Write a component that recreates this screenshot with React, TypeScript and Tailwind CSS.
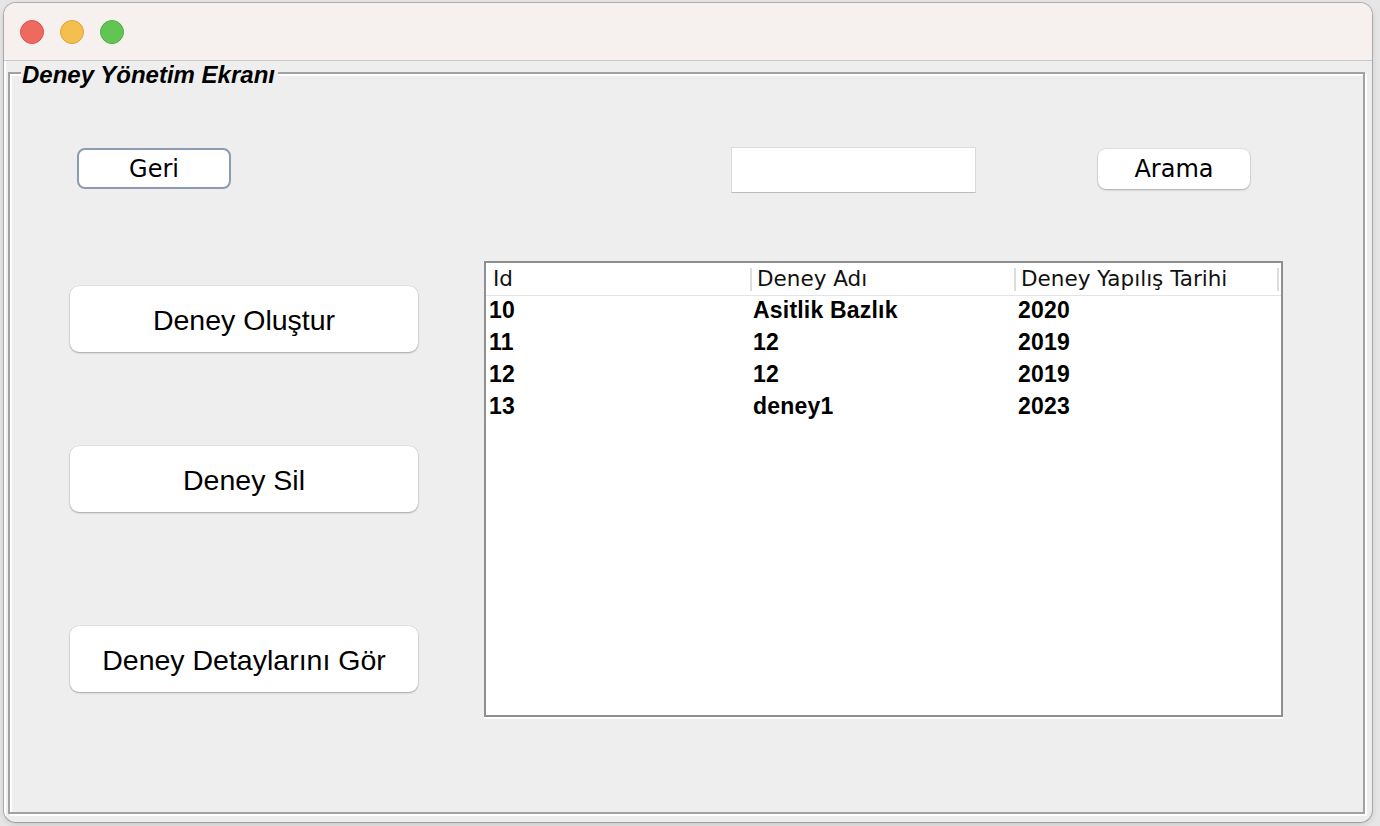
import React from 'react';

// Deney management window (Swing look on macOS)
const ROWS = [
  { id: '10', name: 'Asitlik Bazlık', year: '2020' },
  { id: '11', name: '12', year: '2019' },
  { id: '12', name: '12', year: '2019' },
  { id: '13', name: 'deney1', year: '2023' },
];

const lucida = { fontFamily: '"DejaVu Sans", "Open Sans", sans-serif' };
const helv = { fontFamily: '"Liberation Sans", Arial, sans-serif' };

function BigButton({ label, className = '' }: { label: string; className?: string }) {
  return (
    <button
      type="button"
      style={helv}
      className={`flex h-[66px] w-[348px] items-center justify-center rounded-[9px] bg-white pt-[3px] text-[28.5px] text-black shadow-[0_1px_2px_rgba(0,0,0,0.28),0_0_0_0.5px_rgba(0,0,0,0.08)] ${className}`}
    >
      {label}
    </button>
  );
}

function Table() {
  return (
    <div className="ml-[66px] flex h-[456px] w-[799px] flex-col border-2 border-[#8f8f8f] bg-white shadow-[0_2px_0_#fff]">
      <div
        style={lucida}
        className="flex h-[33px] items-center border-b border-[#e4e4e4] text-[21.5px] text-[#111]"
      >
        <div className="flex h-full w-[266px] items-center pl-[7px]">
          <span className="flex-1">Id</span>
          <span className="h-[23px] w-[2px] bg-[#dcdcdc]" />
        </div>
        <div className="flex h-full w-[264px] items-center pl-[5px]">
          <span className="flex-1">Deney Adı</span>
          <span className="h-[23px] w-[2px] bg-[#dcdcdc]" />
        </div>
        <div className="flex h-full w-[263px] items-center pl-[5px]">
          <span className="flex-1">Deney Yapılış Tarihi</span>
          <span className="h-[23px] w-[2px] bg-[#dcdcdc]" />
        </div>
      </div>
      {ROWS.map((r) => (
        <div
          key={r.id}
          style={helv}
          className="flex h-[32px] items-center pb-[4px] text-[23px] font-bold tracking-[0.2px] text-black"
        >
          <div className="w-[266px] pl-[3px]">{r.id}</div>
          <div className="w-[264px] pl-[1px]">{r.name}</div>
          <div className="w-[263px] pl-[2px]">{r.year}</div>
        </div>
      ))}
    </div>
  );
}

export default function App() {
  return (
    <div className="h-[826px] w-[1380px] overflow-hidden bg-[#e6e6e6] pl-[4px] pt-[3px]">
      <div className="flex h-[819px] w-[1368px] flex-col overflow-hidden rounded-[12px] bg-[#eeeeee] shadow-[0_0_0_1px_rgba(0,0,0,0.22),0_2px_6px_rgba(0,0,0,0.15)]">
        {/* title bar */}
        <div className="flex h-[58px] shrink-0 items-center gap-[16px] border-b border-[#c8c8c8] bg-[#f6f1ef] pl-[16px]">
          <span className="h-[24px] w-[24px] rounded-full border border-[#d9544a] bg-[#ee6a5f]" />
          <span className="h-[24px] w-[24px] rounded-full border border-[#d9a23c] bg-[#f5bf4f]" />
          <span className="h-[24px] w-[24px] rounded-full border border-[#4fae42] bg-[#61c554]" />
        </div>

        {/* content */}
        <div className="flex-1 pl-[4px] pt-[11px] shadow-[inset_2px_0_0_#fff]">
          <div className="relative h-[742px] w-[1357px] border-2 border-[#a2a2a2] shadow-[2px_2px_0_#fff,inset_2px_2px_0_#fff]">
            <div
              style={helv}
              className="absolute left-[11px] top-[-11px] bg-[#eeeeee] pl-[1px] pr-[3px] text-[24px] font-bold italic leading-[23px] text-black"
            >
              Deney Yönetim Ekranı
            </div>

            {/* top row */}
            <div className="mt-[73px] flex items-start" style={lucida}>
              <button
                type="button"
                className="ml-[67px] mt-[1px] flex h-[41px] w-[154px] items-center justify-center rounded-[8px] border-2 border-[#8c9bb1] bg-white text-[24px] text-black"
              >
                Geri
              </button>
              <div className="ml-[500px] h-[46px] w-[245px] border border-[#dadada] border-b-[#bcbcbc] bg-white" />
              <button
                type="button"
                className="ml-[122px] mt-[2px] flex h-[40px] w-[152px] items-center justify-center rounded-[8px] bg-white text-[24px] text-black shadow-[0_1px_2px_rgba(0,0,0,0.25),0_0_0_0.5px_rgba(0,0,0,0.1)]"
              >
                Arama
              </button>
            </div>

            {/* lower section */}
            <div className="mt-[68px] flex items-start">
              <div className="ml-[60px] flex flex-col pt-[25px]">
                <BigButton label="Deney Oluştur" />
                <BigButton label="Deney Sil" className="mt-[94px]" />
                <BigButton label="Deney Detaylarını Gör" className="mt-[114px]" />
              </div>
              <Table />
            </div>
          </div>
        </div>
      </div>
    </div>
  );
}
